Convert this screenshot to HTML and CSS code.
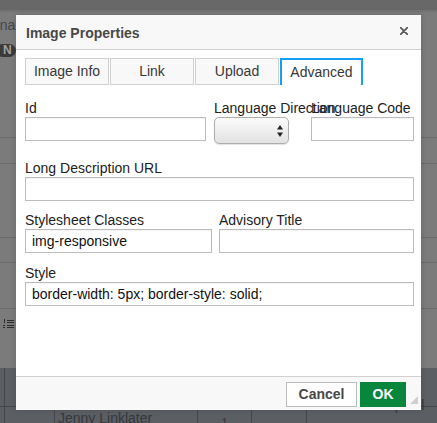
FILE: index.html
```html
<!DOCTYPE html>
<html>
<head>
<meta charset="utf-8">
<link rel="stylesheet" href="styles.css">
</head>
<body>
<div class="page">
  <div class="topband"></div>
  <div class="toolbar">
    <div class="tb-text">rna</div>
    <div class="badge">N</div>
    <div class="rule r1"></div>
    <div class="rule r2"></div>
    <div class="rule r3"></div>
    <div class="rule r4"></div>
    <div class="rule r5"></div>
    <svg class="list-icon" width="11" height="10" viewBox="0 0 11 10">
      <rect x="1" y="0" width="1" height="4" fill="#2e2e2e"/>
      <rect x="4" y="1" width="7" height="1" fill="#2e2e2e"/>
      <rect x="4" y="3" width="7" height="1" fill="#2e2e2e"/>
      <rect x="0" y="6" width="2" height="1" fill="#2e2e2e"/>
      <rect x="0" y="8" width="2" height="1" fill="#2e2e2e"/>
      <rect x="4" y="6" width="7" height="1" fill="#2e2e2e"/>
      <rect x="4" y="8" width="7" height="1" fill="#2e2e2e"/>
    </svg>
  </div>
  <div class="content">
    <div class="cell"></div><div class="cell"></div><div class="cell"></div><div class="cell"></div><div class="cell"></div><div class="cell last"></div>
    <div class="cell b"></div><div class="cell b"></div><div class="cell b name">Jenny Linklater</div><div class="cell b num">1</div><div class="cell b"></div><div class="cell b last name2">Lorraine Campbell</div>
  </div>
</div>

<div class="dialog">
  <div class="dlg-title">
    <span class="dlg-title-text">Image Properties</span>
    <svg class="close" width="8" height="8" viewBox="0 0 8 8">
      <path d="M0.5 0.5 L7.5 7.5 M7.5 0.5 L0.5 7.5" stroke="#5a5a5a" stroke-width="1.8" stroke-linecap="round"/>
    </svg>
  </div>
  <div class="dlg-body">
    <div class="tabs">
      <span class="tab">Image Info</span>
      <span class="tab">Link</span>
      <span class="tab">Upload</span>
      <span class="tab active">Advanced</span>
    </div>

    <div class="row row1">
      <div class="field f-id">
        <label class="lbl">Id</label>
        <input class="txt" type="text" value="">
      </div>
      <div class="field f-dir">
        <label class="lbl nowrap">Language Direction</label>
        <div class="select">
          <svg width="6" height="12" viewBox="0 0 6 12">
            <polygon points="3,0 6,4.5 0,4.5" fill="#222"/>
            <polygon points="0,7.5 6,7.5 3,12" fill="#222"/>
          </svg>
        </div>
      </div>
      <div class="field f-code">
        <label class="lbl nowrap">Language Code</label>
        <input class="txt" type="text" value="">
      </div>
    </div>

    <div class="row row2">
      <div class="field f-full">
        <label class="lbl">Long Description URL</label>
        <input class="txt" type="text" value="">
      </div>
    </div>

    <div class="row row3">
      <div class="field f-class">
        <label class="lbl">Stylesheet Classes</label>
        <input class="txt" type="text" value="img-responsive">
      </div>
      <div class="field f-title">
        <label class="lbl">Advisory Title</label>
        <input class="txt" type="text" value="">
      </div>
    </div>

    <div class="row row4">
      <div class="field f-full">
        <label class="lbl">Style</label>
        <input class="txt" type="text" value="border-width: 5px; border-style: solid;">
      </div>
    </div>
  </div>
  <div class="dlg-foot">
    <button class="btn cancel">Cancel</button>
    <button class="btn ok">OK</button>
  </div>
  <svg class="grip" width="8" height="8" viewBox="0 0 8 8">
    <polygon points="8,0 8,8 0,8" fill="#cfcfcf"/>
  </svg>
</div>
</body>
</html>
```

FILE: styles.css
```css
html, body {
  margin: 0;
  padding: 0;
}

body {
  width: 437px;
  height: 423px;
  overflow: hidden;
  position: relative;
  background: #7b7b7b;
  font-family: "Liberation Sans", Arial, sans-serif;
}

/* background page (under the modal overlay) */
.page {
  display: flex;
  flex-direction: column;
  height: 423px;
}

.topband {
  height: 10px;
  background: #686868;
  border-bottom: 2px solid #727272;
  flex: none;
}

.toolbar {
  flex: none;
  height: 356px;
  overflow: hidden;
  display: flex;
  flex-direction: column;
  align-items: flex-start;
}

.tb-text {
  margin-top: 6px;
  margin-left: -5px;
  font-size: 14px;
  line-height: 14px;
  color: #474747;
}

.badge {
  margin-top: 12px;
  margin-left: -4px;
  width: 20px;
  height: 13px;
  border-radius: 7px;
  background: #3b3b3b;
  color: #a2a2a2;
  font-weight: bold;
  font-size: 12px;
  line-height: 13px;
  padding-left: 7px;
  box-sizing: border-box;
}

.rule {
  align-self: stretch;
  height: 1px;
  background: #6b6b6b;
}
.r1 { margin-top: 80px; }
.r2 { margin-top: 25px; }
.r3 { margin-top: 73px; }
.r4 { margin-top: 24px; }
.r5 { margin-top: 45px; }

.list-icon {
  margin-top: 10px;
  margin-left: 3px;
}

.content {
  flex: 1;
  background: #5b5e63;
  display: grid;
  grid-template-columns: 5px 50px 143px 54px 55px 1fr;
  grid-template-rows: 39px 1fr;
}

.cell {
  border-right: 1px solid #43464b;
  border-bottom: 1px solid #43464b;
  font-size: 14px;
  color: #35383d;
  white-space: nowrap;
}
.cell.b { border-bottom: 0; }
.cell.last { border-right: 0; }
.name { padding: 3px 0 0 3px; }
.num { text-align: center; padding-top: 9px; font-size: 12px; }
.name2 { margin-top: -10px; padding-left: 3px; }

/* dialog */
.dialog {
  position: absolute;
  left: 16px;
  top: 15px;
  width: 405px;
  height: 395px;
  background: #fff;
  display: flex;
  flex-direction: column;
  box-shadow: 0 0 6px rgba(0, 0, 0, 0.15);
}

.dlg-title {
  flex: none;
  height: 35px;
  box-sizing: border-box;
  background: #f8f8f8;
  border-bottom: 1px solid #d1d1d1;
  display: flex;
  align-items: center;
  justify-content: space-between;
  padding: 0 13px 0 10px;
}

.dlg-title-text {
  font-size: 14px;
  font-weight: bold;
  color: #484848;
  line-height: 16px;
  margin-top: 1px;
}

.close {
  margin-top: -2px;
}

.dlg-body {
  flex: 1;
  padding: 8px 7px 0 9px;
}

.tabs {
  display: flex;
  gap: 1px;
  height: 27px;
}

.tab {
  box-sizing: border-box;
  width: 84px;
  height: 27px;
  border: 1px solid #d1d1d1;
  background: #f8f8f8;
  color: #383838;
  font-size: 14px;
  line-height: 25px;
  text-align: center;
}

.tab.active {
  width: 83px;
  background: #fff;
  border: 2px solid #139ff7;
  border-bottom: 0;
  line-height: 25px;
}

.row {
  display: flex;
  align-items: flex-start;
}
.row1 { margin-top: 15px; }
.row2 { margin-top: 16px; }
.row3 { margin-top: 11px; }
.row4 { margin-top: 12px; }

.field {
  display: flex;
  flex-direction: column;
}

.lbl {
  font-size: 14px;
  line-height: 16px;
  color: #222;
  margin-bottom: 1px;
}
.nowrap { white-space: nowrap; }

.f-id { width: 181px; }
.f-dir { width: 97px; margin-left: 8px; }
.f-code { width: 103px; }
.f-full { width: 389px; }
.f-class { width: 187px; }
.f-title { width: 195px; margin-left: 7px; }

.txt {
  box-sizing: border-box;
  width: 100%;
  height: 24px;
  margin: 0;
  border: 1px solid #bcbcbc;
  border-radius: 0;
  padding: 0 6px;
  font-family: "Liberation Sans", Arial, sans-serif;
  font-size: 14px;
  color: #111;
  background: #fff;
  box-shadow: inset 0 1px 0 rgba(0, 0, 0, 0.04);
  outline: none;
}

.select {
  box-sizing: border-box;
  width: 75px;
  height: 27px;
  border: 1px solid #adadad;
  border-radius: 5px;
  background: linear-gradient(#fbfbfb, #e2e2e2);
  box-shadow: 0 1px 1px rgba(0, 0, 0, 0.12);
  display: flex;
  align-items: center;
  justify-content: flex-end;
  padding-right: 5px;
}

.dlg-foot {
  flex: none;
  height: 34px;
  box-sizing: border-box;
  background: #f8f8f8;
  border-top: 1px solid #d1d1d1;
  display: flex;
  justify-content: flex-end;
  align-items: flex-start;
  gap: 3px;
  padding: 5px 15px 0 0;
}

.btn {
  box-sizing: border-box;
  height: 25px;
  margin: 0;
  font-family: "Liberation Sans", Arial, sans-serif;
  font-size: 14px;
  font-weight: bold;
  line-height: 23px;
  padding: 0 11px;
  border-radius: 0;
  cursor: default;
}

.cancel {
  width: 71px;
  background: #fff;
  border: 1px solid #bcbcbc;
  color: #484848;
}

.ok {
  width: 46px;
  background: #09863e;
  border: 1px solid #09863e;
  color: #fff;
}

.grip {
  position: absolute;
  right: 3px;
  bottom: 6px;
}
```
